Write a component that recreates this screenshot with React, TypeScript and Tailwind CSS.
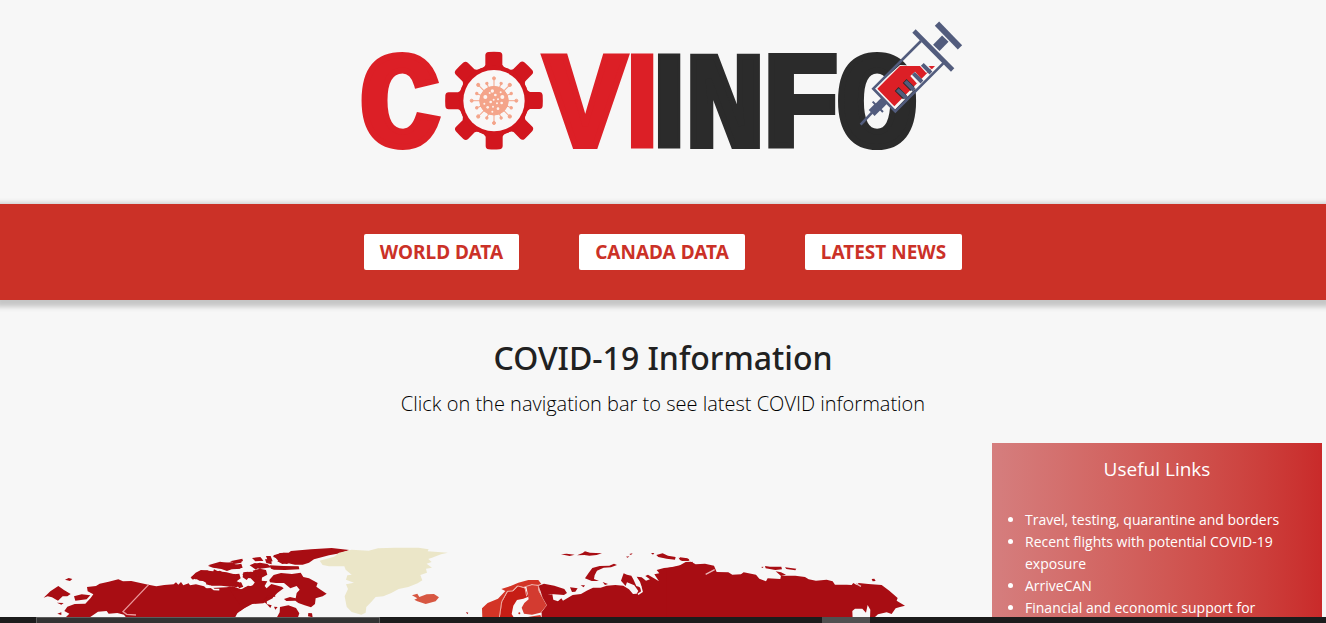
const teeth = [0, 45, 90, 135, 180, 225, 270, 315];
const spikes = [0, 45, 90, 135, 180, 225, 270, 315];

const sections = ["World Data", "Canada Data", "Latest News"];

const links = [
  "Travel, testing, quarantine and borders",
  "Recent flights with potential COVID-19 exposure",
  "ArriveCAN",
  "Financial and economic support for individuals and businesses",
];

function Gear() {
  return (
    <g transform="translate(494 100.7) scale(.3333)">
      <g fill="#d2161e">
        {teeth.map((a) => (
          <path key={a} transform={`rotate(${a})`} d="M-26 -90V-136Q-26 -145 -16 -146Q0 -147 16 -146Q25 -145 25 -136V-108Q28 -100 40 -96V-80H-40V-96Q-28 -100 -26 -108Z" />
        ))}
        <circle r="105" />
      </g>
      <circle r="92" fill="#f9f7f7" />
      <g fill="#f4a48a" stroke="#f4a48a" strokeWidth="3">
        {spikes.map((a) => (
          <g key={a} transform={`rotate(${a})`}>
            <path d="M0 -40V-66" />
            <circle cy="-67" r="4.5" />
            <g transform="rotate(22.5)">
              <path d="M0 -40V-55" />
              <circle cy="-56" r="3.5" />
            </g>
          </g>
        ))}
        <circle r="43" />
      </g>
      <g fill="#fdf3ef">
        <circle cx="-26" cy="-11" r="6" />
        <circle cx="-5" cy="-29" r="5" />
        <circle cx="25" cy="-11" r="6" />
        <circle cx="4" cy="-17" r="4" />
        <circle cx="-13" cy="-23" r="3" />
        <circle cx="-10" cy="4" r="4" />
        <circle cx="-1" cy="-3" r="3" />
        <circle cx="12" cy="-4" r="3" />
        <circle cx="-29" cy="9" r="3" />
        <circle cx="-19" cy="20" r="4" />
        <circle cx="-3" cy="18" r="3" />
        <circle cx="9" cy="8" r="3" />
        <circle cx="23" cy="7" r="4" />
        <circle cx="12" cy="24" r="4" />
        <circle cx="-5" cy="33" r="3" />
        <circle cx="20" cy="-25" r="3" />
      </g>
    </g>
  );
}

function Syringe() {
  return (
    <g transform="translate(650 15) scale(.3333)">
      <path d="M672 219L750 150L832 154L868 146L734 285Z" fill="#f7f7f7" />
      <path d="M682 221L750 153H838L846 160L733 274Z" fill="#dc1f26" />
      <path d="M838 153H855L846 163Z" fill="#dc1f26" />
      <g fill="none" stroke="#f7f7f7" strokeWidth="19">
        <path d="M788 177L808 199" />
        <path d="M817 147L836 168" />
      </g>
      <g fill="none" stroke="#2b2b2b" strokeWidth="16">
        <path d="M740 222L765 247M764 198L788 222" />
      </g>
      <g fill="none" stroke="#525c7d">
        <path d="M813 78L670 221L736 289L882 143" strokeWidth="8" />
        <path d="M742 224L770 250M766 199L792 225M790 175L816 201M817 148L843 174" strokeWidth="12" />
        <path d="M792 48L908 165" strokeWidth="14" />
        <path d="M861 26L930 97" strokeWidth="18" />
        <path d="M886 71L859 99" strokeWidth="27" />
        <path d="M703 257L683 277" strokeWidth="25" />
        <path d="M668 260L699 291" strokeWidth="6" />
        <path d="M683 276L665 294" strokeWidth="25" />
        <path d="M666 293L632 329" strokeWidth="8" />
      </g>
    </g>
  );
}

function Logo() {
  return (
    <svg viewBox="353 15 620 150" className="w-[620px] max-w-full" role="img" aria-label="COVIINFO">
      <g fontFamily="'Liberation Mono', monospace" fontWeight="700" fontSize="136" strokeWidth="6" textAnchor="middle">
        <g fill="#dc1f26" stroke="#dc1f26">
          <text x="400" y="146">C</text>
          <text x="585" y="146">V</text>
          <text x="642" y="147" fontFamily="'Liberation Sans', sans-serif" fontSize="134" strokeWidth="3">I</text>
        </g>
        <g fill="#2b2b2b" stroke="#2b2b2b">
          <text x="669" y="147" fontFamily="'Liberation Sans', sans-serif" fontSize="134" strokeWidth="3">I</text>
          <text x="725" y="146">N</text>
          <text x="801" y="146">F</text>
          <text x="877" y="146">O</text>
        </g>
      </g>
      <Gear />
      <Syringe />
    </svg>
  );
}

function WorldMap() {
  return (
    <svg viewBox="0 443 992 174" className="block w-full" role="img" aria-label="World map of COVID-19 cases">
      <g transform="translate(30 535) scale(.3333)" fill="#a80d13">
        <path d="M104 250L118 236L103 228L112 215L134 207L166 206L182 189L190 178L173 169L171 156L198 153L209 146L236 140L265 133L279 139L304 138L355 149L379 154L403 150L431 148L438 142L445 149L453 141L460 151L476 145L480 151L498 148L522 154L530 160L560 158L590 157L608 154L633 163L660 158L690 166L702 157L712 172L690 184L735 176L728 190L700 205L667 207L640 221L622 235L614 250Z" />
        <path d="M41 188L61 169L85 153L102 165L122 177L112 184L98 184L84 197L66 187L53 184ZM105 134L116 129L127 132L120 138ZM132 184L155 178L181 181L170 193L136 197ZM81 203L101 204L94 209ZM82 236L94 232L94 240Z" />
        <path d="M482 128L497 113L513 105L550 109L552 103L564 109L590 112L612 118L628 116L632 130L620 139L635 145L621 157L600 154L570 150L539 151L528 148L530 139L508 137L496 129L489 134Z" />
        <path d="M535 93L570 84L605 82L616 89L634 86L638 98L621 102L605 103L591 108L572 101L549 98ZM600 79L637 71L639 78L618 85ZM668 69L692 67L700 78L684 76ZM659 91L675 84L690 91L678 104ZM637 117L660 110L690 112L681 126L694 135L676 144L662 130L645 128ZM620 149L633 141L640 155L628 160ZM643 158L670 151L676 160L655 166Z" />
        <path d="M356 149L279 230L290 238L318 240" fill="none" stroke="#ea989b" strokeWidth="4" />
        <path d="M178 248L204 230L230 228L236 236L262 234L282 239L290 250Z" fill="#f7f7f7" />
        <path d="M525 154L543 156L552 163L568 164M639 165L650 161L660 166" fill="none" stroke="#f7f7f7" strokeWidth="5" />
      </g>
      <g transform="translate(180 540) scale(.3333)" fill="#a80d13">
        <path d="M150 150L184 151L200 146L226 140L230 128L224 112L238 104L247 110L244 122L262 124L254 138L264 150L284 158L286 170L262 172L246 184L215 190L180 195Z" />
        <path d="M34 110L62 92L82 91L95 97L120 92L135 101L165 102L172 116L160 122L168 132L150 140L125 137L95 137L78 128L60 118L45 118Z" />
        <path d="M84 76L120 65L150 70L186 58L184 68L162 72L186 78L180 86L140 88L110 84ZM190 97L205 95L212 106L200 120L188 112ZM218 92L240 86L258 90L262 104L248 112L226 106ZM216 54L240 52L250 62L226 64ZM218 72L240 68L262 72L275 82L240 86L222 84ZM280 46L310 38L345 40L350 60L320 72L296 64ZM258 48L272 48L278 64L264 64Z" />
      </g>
      <g transform="translate(240 535) scale(.3333)">
        <g fill="#a80d13">
          <path d="M98 65L120 54L146 53L153 48L213 43L275 39L328 45L300 55L267 61L222 73L207 83L188 89L165 89L145 85L127 87L112 79L119 73Z" />
          <path d="M89 91L130 93L176 94L178 103L135 105L102 104L93 101ZM75 73L94 72L95 88L79 84Z" />
          <path d="M88 135L101 120L123 114L156 117L182 113L190 126L207 130L233 144L229 155L242 164L260 176L248 184L227 190L225 207L213 217L194 211L175 204L166 197L139 198L132 192L150 186L167 190L170 174L179 164L170 153L151 160L132 144L108 144L90 142Z" />
          <path d="M94 147L125 155L131 160L112 174L104 182L83 181L72 194L43 199L25 211L0 229V165L24 152L36 154L48 137L64 131L67 146L61 158L75 164ZM80 207L95 211L91 219ZM64 194L80 198L81 208ZM102 215L113 216L106 224ZM120 216L145 211L168 219L178 235L173 250H109L119 232ZM205 234L216 235L218 247L204 244Z" />
        </g>
        <path d="M239 77L282 65L297 53L335 44L386 47L414 40L465 38L536 38L566 43L563 49L624 53L603 58L580 67L565 72L575 81L560 86L576 98L558 101L561 113L541 120L547 136L533 145L505 156L476 162L454 174L430 184L407 186L393 202L379 216L377 233L364 239L335 231L320 215L314 184L324 162L318 148L342 143L318 134L322 121L335 119L317 104L313 94L267 94L248 90Z" fill="#ebe6c8" />
        <path d="M516 181L532 176L538 186L560 178L582 177L597 187L587 199L557 207L532 199L523 194L532 190Z" fill="#d75742" />
      </g>
      <g transform="translate(450 535) scale(.3333)">
        <path d="M96 220L113 204L144 191L166 168L154 162L182 153L205 143L235 135L265 135L274 147L256 152L246 148L235 153L219 156L202 152L186 169L172 169L157 198L153 229L148 250H97Z" fill="#d33426" />
        <path d="M149 248L157 199L174 169L190 168L205 153L225 160L235 185L220 191L201 195L190 212L185 237L193 250Z" fill="#c61d15" />
        <path d="M229 154L246 149L268 153L268 170L280 193L291 211L277 232L246 239L222 236L215 218L223 204L236 193L232 170ZM234 246L271 240L275 250H232Z" fill="#d33b30" />
        <path d="M148 248L155 200L172 169L188 168L204 153L225 159L230 184M229 154L246 149L265 151L266 166L291 211L273 233" fill="none" stroke="#efaba3" strokeWidth="3" />
        <g fill="#a80d13">
          <path d="M266 152L282 146L313 152L343 162L351 174L342 180L303 177L292 180L307 178L310 194L324 199L334 190L339 197L368 180L393 177L410 167L429 158L452 158L470 152L496 150L520 152L537 163L549 177L560 176L565 168L553 151L531 142L527 153L513 137L521 115L531 119L544 122L550 133L559 153L576 158L570 140L560 125L575 127L588 137L600 133L586 123L594 119L612 130L627 139L613 118L628 115L620 105L642 99L680 95L705 86L728 80V250H275V232L291 211L278 188Z" />
          <path d="M405 130L418 111L427 99L449 93L478 92L492 86L501 90L483 97L461 98L441 107L434 121L432 132L447 138L425 138ZM392 151L405 151L401 157ZM360 157L383 160L376 170L366 171ZM458 141L474 147L465 150ZM333 58L350 56L374 59L359 63ZM381 61L398 54L405 49L420 53L456 55L440 60L418 62L403 60ZM528 65L538 64L533 68ZM538 57L548 55L543 60ZM603 54L613 54L609 59ZM619 60L638 55L654 62L677 66L675 74L650 71L625 66ZM686 68L718 72L714 78L690 75ZM573 156L601 154L594 163L578 165Z" />
          <path d="M48 231L55 233L52 238Z" />
        </g>
        <path d="M552 127L573 158L576 170L564 178" fill="none" stroke="#f7f7f7" strokeWidth="5" />
        <circle cx="208" cy="235" r="3" fill="#c61d15" />
      </g>
      <g transform="translate(680 535) scale(.3333)" fill="#a80d13">
        <path d="M0 91L17 81L33 80L47 88L75 86L102 92L110 111L145 112L157 119L183 118L191 112L228 119L238 131L258 139L263 130L301 132L303 122L346 122L375 126L386 133L408 137L440 134L458 139L465 149L500 149L515 150L520 144L530 150L536 144L565 147L605 150L628 167L653 189L650 197L675 212L660 216L647 220L635 237L620 232L594 238L583 248L570 250L571 224L563 210L558 233L547 221L525 221L517 228L518 250H-40V100Z" />
        <path d="M0 67L22 70L29 77L7 78L0 75ZM243 96L250 95L249 99ZM255 93L270 95L304 95L306 103L286 105L257 100ZM315 97L349 101L346 106L319 102ZM287 109L303 112L318 119L303 123ZM575 132L583 131L587 138L578 139Z" />
        <path d="M77 118L104 104M528 146L543 154" fill="none" stroke="#e9b6b7" strokeWidth="4" />
      </g>
    </svg>
  );
}

export default function App() {
  return (
    <div className="flex h-screen flex-col overflow-hidden bg-[#f7f7f7] font-['Open_Sans','Noto_Sans',sans-serif] text-[#212121]">
      <div className="min-h-0 flex-1 overflow-hidden">
        <header className="flex justify-center pt-[15px] pb-[39px]">
          <Logo />
        </header>
        <nav className="flex flex-wrap justify-center gap-[60px] bg-[#cb3127] py-[30px] shadow-[0_3px_5px_4px_rgba(0,0,0,0.2)]">
          {sections.map((s) => (
            <a key={s} href="#" className="flex h-9 items-center rounded-xs bg-white px-4 font-['Noto_Sans','Open_Sans',sans-serif] text-[19px] font-bold whitespace-nowrap text-[#cb3127] uppercase">
              {s}
            </a>
          ))}
        </nav>
        <section className="pt-9 text-center">
          <h1 className="font-['Noto_Sans','Open_Sans',sans-serif] text-[32px] leading-[44px] font-medium">COVID-19 Information</h1>
          <p className="mt-2 text-[20px] leading-8 font-light text-black">Click on the navigation bar to see latest COVID information</p>
        </section>
        <div className="mt-[23px] flex items-start pr-1">
          <main className="min-w-0 flex-1">
            <WorldMap />
          </main>
          <aside className="w-[330px] bg-linear-to-r from-[#d57e7e] to-[#c92a2a] px-[33px] pt-3 pb-8 text-white">
            <h2 className="text-center text-[19px] leading-7">Useful Links</h2>
            <ul className="mt-[26px] list-disc text-[14px] leading-[22px]">
              {links.map((l) => (
                <li key={l}>
                  <a href="#">{l}</a>
                </li>
              ))}
            </ul>
          </aside>
        </div>
      </div>
      <footer className="flex h-1.5 shrink-0 bg-[#1c1c1c] pl-9">
        <div className="w-[344px] border border-b-0 border-[#5c5c5c] bg-[#333333]" />
        <div className="ml-[442px] w-12 bg-[#505050]" />
      </footer>
    </div>
  );
}
